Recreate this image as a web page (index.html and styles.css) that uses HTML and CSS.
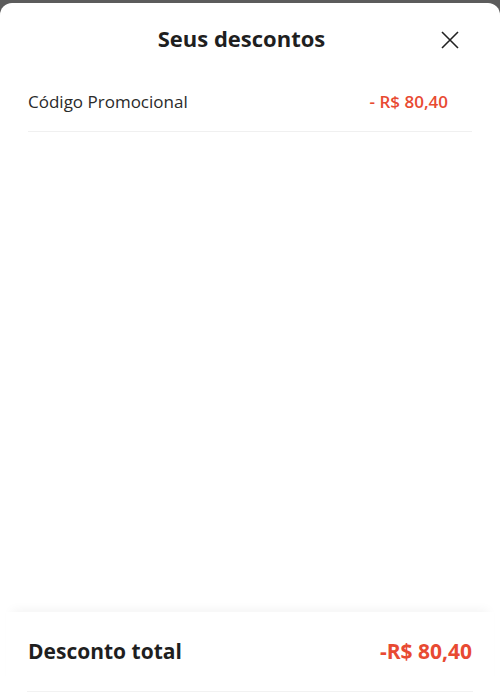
FILE: index.html
```html
<!DOCTYPE html>
<html>
  <head>
    <meta name="viewport" content="width=device-width, initial-scale=1.0" />
    <link rel="stylesheet" href="styles.css">
  </head>
  <body>
    <div class="sheet">
      <div class="sheet-header">
        <h1>Seus descontos</h1>
        <button class="close-btn" aria-label="Fechar">
          <svg width="20" height="20" viewBox="0 0 20 20" fill="none" stroke="currentColor" stroke-width="1.6">
            <path d="M2 2L18 18M18 2L2 18"></path>
          </svg>
        </button>
      </div>

      <div class="discount-list">
        <div class="discount-row">
          <span class="discount-name">Código Promocional</span>
          <span class="discount-value">- R$ 80,40</span>
        </div>
      </div>

      <div class="sheet-footer">
        <div class="total-row">
          <span class="total-label">Desconto total</span>
          <span class="total-value">-R$ 80,40</span>
        </div>
        <div class="footer-line"></div>
      </div>
    </div>
  </body>
</html>
```

FILE: styles.css
```css
* {
  box-sizing: border-box;
  margin: 0;
  padding: 0;
}

html,
body {
  height: 100%;
}

body {
  font-family: "Open Sans", "Noto Sans", sans-serif;
  background: #5c5c5c;
  padding-top: 3px;
  overflow: hidden;
}

.sheet {
  height: 100%;
  background: white;
  border-radius: 12px 12px 0 0;
  display: flex;
  flex-direction: column;
}

.sheet-header {
  position: relative;
  height: 70px;
  padding-right: 17px;
  display: flex;
  align-items: center;
  justify-content: center;
}

h1 {
  font-size: 22px;
  font-weight: 700;
  color: #1f1f1f;
  margin-top: 0;
}

.close-btn {
  position: absolute;
  right: 40px;
  top: 27px;
  background: none;
  border: none;
  color: #222;
  cursor: pointer;
  display: flex;
}

.discount-list {
  flex: 1;
  padding: 0 28px;
}

.discount-row {
  display: flex;
  justify-content: space-between;
  align-items: center;
  height: 59px;
  padding-right: 24px;
  padding-bottom: 2px;
  border-bottom: 1px solid #f0f0f0;
}

.discount-name {
  font-size: 17px;
  color: #2a2a2a;
}

.discount-value {
  font-size: 17px;
  font-weight: 600;
  color: #e84a32;
}

.sheet-footer {
  box-shadow: 0 -8px 10px -6px rgba(0, 0, 0, 0.05);
  margin: 0 6px;
}

.total-row {
  display: flex;
  justify-content: space-between;
  align-items: center;
  height: 78px;
  padding: 0 22px;
}

.total-label {
  font-size: 21px;
  font-weight: 700;
  color: #1f1f1f;
}

.total-value {
  font-size: 21px;
  font-weight: 700;
  color: #e84a32;
}

.footer-line {
  height: 2px;
  margin: 1px 21px 0;
  border-top: 1px solid #f2f2f2;
}
```
